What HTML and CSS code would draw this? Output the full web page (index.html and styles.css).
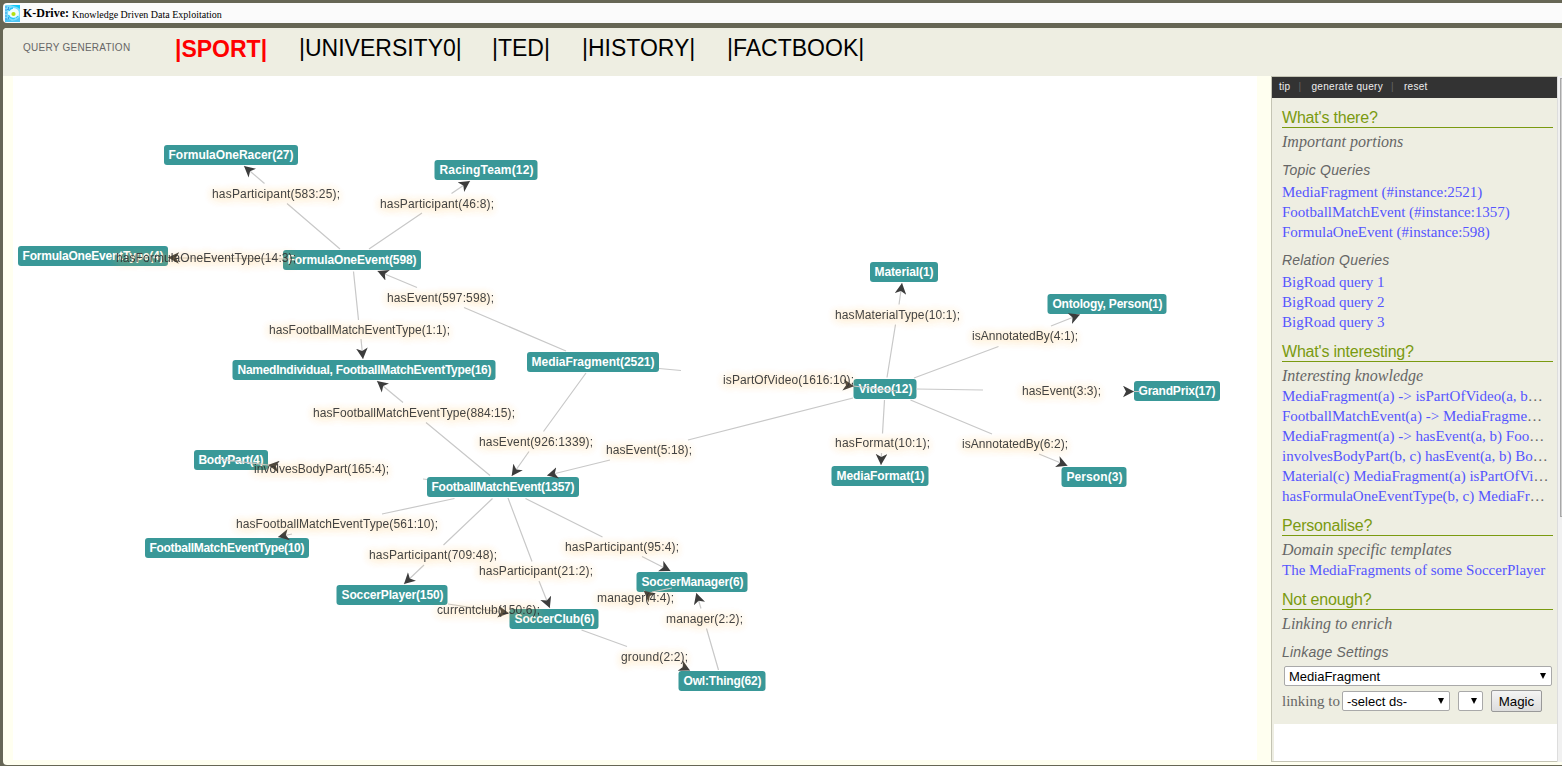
FILE: index.html
```html
<!DOCTYPE html>
<html lang="en">
<head>
<meta charset="utf-8">
<title>K-Drive</title>
<link rel="stylesheet" href="styles.css">
</head>
<body>
<header class="brand">
  <svg class="logo" width="15" height="17" viewBox="0 0 15 17"><rect width="15" height="17" rx="1" fill="#7adcfb"/><path d="M5 0h10v4l-3-2z" fill="#12c8f8"/><path d="M0 17v-4l4 1 3 2 4-1 4-3v5z" fill="#4cc4f4"/><circle cx="8.500" cy="8.500" r="5.500" fill="#effcff"/><path d="M1 1v14M3.500 2v3M2 4.500h2M3.500 12v3" stroke="#3b9be8" stroke-dasharray="2 1" fill="none"/><path d="M13 11a5.300 5.300 0 0 1-9.500-1M4 6a5 5 0 0 1 4-3" stroke="#25c6f8" stroke-width="1.300" fill="none"/><circle cx="8.500" cy="9" r="2.100" fill="#b4e012"/></svg>
  <b>K-Drive:</b><span class="tagline">Knowledge Driven Data Exploitation</span>
</header>
<div class="app">
  <nav class="menu">
    <span class="menu-title">QUERY GENERATION</span>
    <div class="tabs"><b class="active">|SPORT|</b><span>|UNIVERSITY0|</span><span>|TED|</span><span>|HISTORY|</span><span>|FACTBOOK|</span></div>
  </nav>
  <div class="content">
    <main class="canvas">
      <svg class="graph" width="1244" height="684" viewBox="13 76 1244 684">
        <defs><marker id="arrow" viewBox="-1 0 11 12" refX="10" refY="6" markerWidth="11" markerHeight="12" markerUnits="userSpaceOnUse" orient="auto"><path d="M10 6L-1 .200L2 6L-1 11.800z" fill="#3c3c3c"/></marker></defs>
        <g class="nodes">
          <rect x="164" y="145" width="134" height="20" rx="3"/><rect x="434.500" y="160" width="103" height="20" rx="3"/><rect x="18" y="246" width="150" height="20" rx="3"/><rect x="283" y="250" width="138" height="20" rx="3"/><rect x="232.500" y="360" width="263" height="20" rx="3"/><rect x="527" y="352" width="132" height="20" rx="3"/><rect x="194" y="450" width="74" height="20" rx="3"/><rect x="427" y="477" width="152" height="20" rx="3"/><rect x="145" y="538" width="164" height="20" rx="3"/><rect x="336.500" y="585" width="111" height="20" rx="3"/><rect x="509.500" y="609" width="89" height="20" rx="3"/><rect x="636.500" y="572" width="111" height="20" rx="3"/><rect x="678.500" y="671" width="87" height="20" rx="3"/><rect x="870" y="262" width="68" height="20" rx="3"/><rect x="1047.500" y="294" width="119" height="20" rx="3"/><rect x="1134" y="381" width="86" height="20" rx="3"/><rect x="853.500" y="379" width="63" height="20" rx="3"/><rect x="831.500" y="466" width="97" height="20" rx="3"/><rect x="1061.500" y="467" width="65" height="20" rx="3"/>
          <text x="168.500" y="159" textLength="125">FormulaOneRacer(27)</text>
          <text x="439.500" y="174" textLength="94">RacingTeam(12)</text>
          <text x="22.500" y="260" textLength="141">FormulaOneEventType(4)</text>
          <text x="287.500" y="264" textLength="129">FormulaOneEvent(598)</text>
          <text x="237.500" y="374" textLength="254">NamedIndividual, FootballMatchEventType(16)</text>
          <text x="531.500" y="366" textLength="123">MediaFragment(2521)</text>
          <text x="198.500" y="464" textLength="65">BodyPart(4)</text>
          <text x="431.500" y="491" textLength="143">FootballMatchEvent(1357)</text>
          <text x="149.500" y="552" textLength="155">FootballMatchEventType(10)</text>
          <text x="341.500" y="599" textLength="102">SoccerPlayer(150)</text>
          <text x="514.500" y="623" textLength="80">SoccerClub(6)</text>
          <text x="641.500" y="586" textLength="102">SoccerManager(6)</text>
          <text x="683.500" y="685" textLength="78">Owl:Thing(62)</text>
          <text x="874.500" y="276" textLength="59">Material(1)</text>
          <text x="1052.500" y="308" textLength="110">Ontology, Person(1)</text>
          <text x="1138.500" y="395" textLength="77">GrandPrix(17)</text>
          <text x="858.500" y="393" textLength="54">Video(12)</text>
          <text x="836.500" y="480" textLength="88">MediaFormat(1)</text>
          <text x="1066.500" y="481" textLength="56">Person(3)</text>
        </g>
        <g class="edges">
          <path d="M340 249L287 203.500M369 249L422 213M290 259L180 258M566 351L464 307.500M353.500 271.500L358.500 320M659 368.500L681 370.500M586 373L543.500 431.500M490 475.500L426 422.500M853 398L688 440M427 479.500L423 479M454.500 498.500L382 514M492.500 498.500L443.500 545M508 498L532 561.500M525.500 498.500L602.500 537M672 588L652 592M581.500 630L627 646.500M718.500 670L706.500 628.500M887 377.500L895.500 324.500M914 378L998.500 346.500M916 389L983 390M884.500 400L882.500 433.500M910.500 400L992 434M853 386L897 391M1134 391.500H1140M218 459L268 465"/>
          <path class="tip" d="M264.500 183.500L244 166"/><path class="tip" d="M451.500 193.500L470 181"/><path class="tip" d="M180 258L168 257.500"/><path class="tip" d="M417 287.500L377.500 271"/><path class="tip" d="M361 339L363 359"/><path class="tip" d="M846 385.200L854 386.200"/><path class="tip" d="M529 451.500L511.700 476"/><path class="tip" d="M403 402.500L377 381"/><path class="tip" d="M610 460L547 475.500"/><path class="tip" d="M275 466L268 465"/><path class="tip" d="M292 534L278 537"/><path class="tip" d="M424 565L404 584"/><path class="tip" d="M539 581L549.800 608"/><path class="tip" d="M642 556.500L670.500 571"/><path class="tip" d="M650 596L643.800 590.700"/><path class="tip" d="M448 604L509 613.300"/><path class="tip" d="M682 666.500L690 670.500"/><path class="tip" d="M701 608.500L696.300 593"/><path class="tip" d="M899 304.500L902 283"/><path class="tip" d="M1051 326L1080 314.500"/><path class="tip" d="M1126 391.500L1134 391.500"/><path class="tip" d="M881.500 453L881 465"/><path class="tip" d="M1039 454L1067.500 465.700"/>
        </g>
        <g class="labels">
          <text x="212" y="198" textLength="128">hasParticipant(583:25);</text>
          <text x="380" y="208" textLength="114">hasParticipant(46:8);</text>
          <text x="116" y="262" textLength="180">hasFormulaOneEventType(14:3);</text>
          <text x="387" y="302" textLength="107">hasEvent(597:598);</text>
          <text x="269" y="334" textLength="181">hasFootballMatchEventType(1:1);</text>
          <text x="313" y="417" textLength="202">hasFootballMatchEventType(884:15);</text>
          <text x="479" y="446" textLength="114">hasEvent(926:1339);</text>
          <text x="254" y="473" textLength="135">involvesBodyPart(165:4);</text>
          <text x="606" y="454" textLength="86">hasEvent(5:18);</text>
          <text x="236" y="528" textLength="202">hasFootballMatchEventType(561:10);</text>
          <text x="369" y="559" textLength="128">hasParticipant(709:48);</text>
          <text x="479" y="575" textLength="114">hasParticipant(21:2);</text>
          <text x="565" y="551" textLength="114">hasParticipant(95:4);</text>
          <text x="437" y="614" textLength="103">currentclub(150:6);</text>
          <text x="597" y="602" textLength="77">manager(4:4);</text>
          <text x="666" y="623" textLength="77">manager(2:2);</text>
          <text x="621" y="661" textLength="67">ground(2:2);</text>
          <text x="723" y="384" textLength="131">isPartOfVideo(1616:10);</text>
          <text x="835" y="319" textLength="125">hasMaterialType(10:1);</text>
          <text x="972" y="340" textLength="106">isAnnotatedBy(4:1);</text>
          <text x="1022" y="395" textLength="79">hasEvent(3:3);</text>
          <text x="835" y="447" textLength="95">hasFormat(10:1);</text>
          <text x="962" y="448" textLength="106">isAnnotatedBy(6:2);</text>
        </g>
      </svg>
    </main>
    <aside class="side">
      <div class="toolbar"><span>tip</span><i>|</i><span>generate query</span><i>|</i><span>reset</span></div>
      <div class="panel">
        <h2>What's there?</h2>
        <p class="note">Important portions</p>
        <h3>Topic Queries</h3>
        <a>MediaFragment (#instance:2521)</a>
        <a>FootballMatchEvent (#instance:1357)</a>
        <a>FormulaOneEvent (#instance:598)</a>
        <h3>Relation Queries</h3>
        <a>BigRoad query 1</a>
        <a>BigRoad query 2</a>
        <a>BigRoad query 3</a>
        <h2>What's interesting?</h2>
        <p class="note">Interesting knowledge</p>
        <a>MediaFragment(a) -&gt; isPartOfVideo(a, b<em>…</em></a>
        <a>FootballMatchEvent(a) -&gt; MediaFragme<em>…</em></a>
        <a>MediaFragment(a) -&gt; hasEvent(a, b) Foo<em>…</em></a>
        <a>involvesBodyPart(b, c) hasEvent(a, b) Bo<em>…</em></a>
        <a>Material(c) MediaFragment(a) isPartOfVi<em>…</em></a>
        <a>hasFormulaOneEventType(b, c) MediaFr<em>…</em></a>
        <h2>Personalise?</h2>
        <p class="note">Domain specific templates</p>
        <a>The MediaFragments of some SoccerPlayer</a>
        <h2>Not enough?</h2>
        <p class="note">Linking to enrich</p>
        <h3>Linkage Settings</h3>
        <div class="select source">MediaFragment<i class="caret"></i></div>
        <div class="link-row"><span>linking to</span><div class="select dataset">-select ds-<i class="caret"></i></div><div class="select empty"><i class="caret"></i></div><button>Magic</button></div>
      </div>
      <div class="results"></div>
    </aside>
    <div class="scroll"><div class="thumb"></div></div>
  </div>
</div>
</body>
</html>
```
FILE: styles.css
```css
* { box-sizing: border-box; }
body { margin: 0; height: 766px; padding: 3px 0 0 3px; background: #666655; overflow: hidden; font-family: "Liberation Sans", Arial, sans-serif; }
.brand { height: 20px; background: #fbfbfb; border-radius: 4px 0 0 4px; display: flex; align-items: center; padding-left: 2px; font-family: "Liberation Serif", "Times New Roman", serif; font-size: 12px; color: #000; white-space: nowrap; }
.brand b { margin-left: 3px; width: 49px; padding-top: 1px; }
.tagline { font-size: 10px; padding-top: 3px; }
.app { height: 737px; margin-top: 5px; background: #fffff0; border-radius: 4px 0 0 4px; overflow: hidden; display: flex; flex-direction: column; }
.menu { height: 48px; background: #eeeee2; display: flex; padding-left: 20px; }
.menu-title { width: 152px; padding-top: 13px; font-size: 10px; line-height: 14px; letter-spacing: .25px; color: #666; }
.tabs { display: grid; grid-template-columns: 124px 193px 90px 145px auto; font-size: 23px; line-height: 40px; color: #000; white-space: nowrap; }
.tabs .active { color: #f00; line-height: 42px; }
.content { height: 689px; display: flex; }
.canvas { width: 1244px; height: 684px; margin-left: 10px; background: #fff; }
.graph { display: block; font-size: 12px; }
.nodes rect { fill: #399898; }
.nodes text { fill: #fff; font-weight: bold; }
.edges path { fill: none; stroke: #c8c8c8; stroke-width: 1.2; }
.edges .tip { marker-end: url(#arrow); }
.labels text { fill: #333; opacity: .92; filter: drop-shadow(0 1px 4px rgba(255, 180, 60, .5)) drop-shadow(0 1px 4px rgba(255, 190, 80, .35)); }
.side { width: 286px; height: 686px; margin-left: 14px; border: 1px solid #c4c4b4; border-right: 0; background: #eeeee2; color: #666; display: flex; flex-direction: column; }
.toolbar { height: 21px; flex: none; background: #333; color: #eee; font-size: 10px; line-height: 20px; letter-spacing: .3px; display: flex; padding-left: 7px; white-space: nowrap; }
.toolbar i { color: #666; font-style: normal; width: 13px; margin-left: 8px; }
.panel { height: 626px; flex: none; padding: 9px 4px 0 10px; }
.panel h2 { margin: 9px 0 4px; height: 21px; border-bottom: 1px solid #7a9a10; color: #7a9a10; font-size: 16px; font-weight: normal; line-height: 21px; letter-spacing: -.2px; }
.panel h2:first-child { margin-top: 0; }
.panel h3 { margin: 8px 0 2px; height: 20px; line-height: 20px; font-size: 14px; letter-spacing: .2px; font-weight: normal; font-style: italic; }
.note { margin: 0; height: 20px; line-height: 20px; font: italic 16px/20px "Liberation Serif", serif; }
.panel a { display: block; height: 20px; font: 15px/21px "Liberation Serif", serif; color: #5555ff; white-space: nowrap; }
.panel em { color: #666; font-style: normal; }
.select { height: 20px; border: 1px solid #a9a9a9; border-radius: 2px; background: #fff; color: #000; font-size: 13px; line-height: 19px; padding: 0 5px 0 4px; display: flex; justify-content: space-between; align-items: center; white-space: nowrap; }
.caret { border: 3.5px solid transparent; border-top: 6px solid #000; border-bottom: 0; }
.source { margin: 4px 1px 0 2px; }
.link-row { display: flex; align-items: center; height: 22px; margin-top: 4px; font: 15px/20px "Liberation Serif", serif; }
.link-row span { width: 60px; white-space: nowrap; }
.link-row .select { font-family: "Liberation Sans", Arial, sans-serif; }
.dataset { width: 108px; }
.empty { width: 25px; margin-left: 8px; justify-content: flex-end; }
.link-row button { width: 51px; height: 22px; margin-left: 8px; padding: 0; border: 1px solid #999; border-radius: 2px; background: linear-gradient(#f4f4f4, #ddd); color: #000; font: 13.3px "Liberation Sans", Arial, sans-serif; }
.results { flex: 1; margin-left: 2px; background: #fff; }
.scroll { width: 5px; height: 686px; padding: 2px 0 0 2px; background: #f1f1f1; border-left: 1px solid #ddd; }
.thumb { height: 439px; border: 1px solid #a8a8a8; border-right: 0; background: #d0d0d0; }
```
